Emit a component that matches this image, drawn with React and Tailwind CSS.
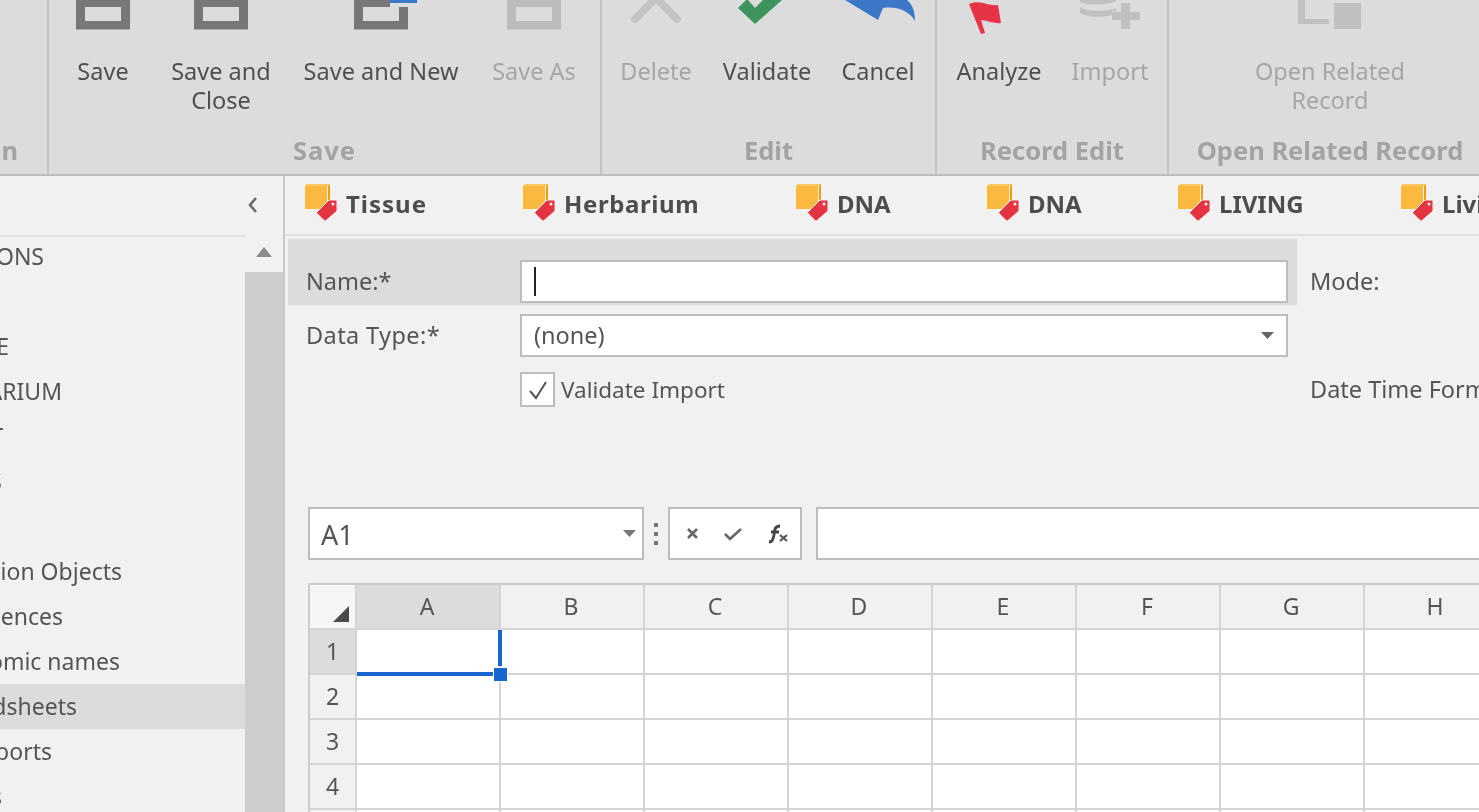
import React from "react";

function RibbonButton({ w, label, disabled, children, line2 }) {
  return (
    <div className={`flex flex-col items-center shrink-0 ${w}`}>
      <div className="h-[57px] w-full flex justify-center items-start">{children}</div>
      <div className={`text-[23.5px] leading-[29px] text-center whitespace-nowrap ${disabled ? "text-[#a6a6a6]" : "text-[#505050]"}`}>
        <div>{label}</div>
        {line2 && <div>{line2}</div>}
      </div>
    </div>
  );
}

function Group({ w, title, children, last, track }) {
  return (
    <div className={`relative shrink-0 h-full flex flex-col ${w} ${last ? "" : "border-r-2 border-[#c2c2c2]"}`}>
      <div className="flex h-[135px]">{children}</div>
      <div className={`text-[25.5px] leading-[30px] font-bold text-[#a3a3a3] text-center whitespace-nowrap ${track || ""}`}>{title}</div>
    </div>
  );
}

const SaveIcon = ({ c = "#777777" }) => (
  <svg width="54" height="30" viewBox="0 0 54 30">
    <path d="M0 0H54V29.5H0Z M9 7V21H45V7Z" fillRule="evenodd" fill={c} />
  </svg>
);

const SaveNewIcon = () => (
  <svg width="64" height="30" viewBox="0 0 64 30" className="ml-[10px]">
    <path d="M0 0H36V7H9V21H36V7H54V29.5H0Z" fill="#777777" fillRule="evenodd" />
    <path d="M36 7H45V21H36Z" fill="#dcdcdc" />
    <path d="M36 3H45V7H36Z" fill="#dcdcdc" />
    <rect x="36" y="0" width="27" height="3" fill="#3b78c9" />
  </svg>
);

const DeleteIcon = () => (
  <svg width="50" height="24" viewBox="0 0 50 24">
    <path d="M4 19L25 -2L46 19" fill="none" stroke="#c4c4c4" strokeWidth="8" strokeLinecap="round" />
  </svg>
);

const CheckIcon = () => (
  <svg width="44" height="24" viewBox="0 0 44 24" className="mr-[14px]">
    <path d="M0 8L8 0H10L17 8L25 0H44L17 24Z" fill="#3f935c" />
  </svg>
);

const CancelIcon = () => (
  <svg width="70" height="22" viewBox="0 0 70 22" className="ml-[4px]">
    <path d="M0 0L33 20L38 8C50 6 64 10 70 21C70 12 68 5 62 0Z" fill="#3d78c8" />
  </svg>
);

const FlagIcon = () => (
  <svg width="33" height="33" viewBox="0 0 33 33" className="mt-[2px] mr-[28px]">
    <path d="M0 2C5 0 9 0 14 1C19 2 24 4 29 3L32 21C26 22 20 19 12 18L16 31L12 32Z" fill="#e63446" />
  </svg>
);

const ImportIcon = () => (
  <svg width="60" height="30" viewBox="0 0 60 30">
    <path d="M0 0H36V1C30 5 8 6 0 2ZM0 7C8 12 28 12 36 8V11H32V15C22 18 6 17 0 13Z" fill="#c0c0c0" />
    <path d="M32 12H41V3H50V12H60V20H50V29H41V20H32Z" fill="#c0c0c0" />
  </svg>
);

const RelatedIcon = () => (
  <svg width="64" height="30" viewBox="0 0 64 30">
    <path d="M0 0H7V19H31V24H0Z" fill="#c0c0c0" />
    <rect x="36" y="3" width="27" height="26" fill="#c0c0c0" />
  </svg>
);

const TagBox = () => (
  <svg width="32" height="37" viewBox="0 0 32 37" className="shrink-0 -mt-[6px]">
    <path d="M0 2H22V25H0Z" fill="#fbb93f" />
    <path d="M2 0H25L22 2H0Z" fill="#fcc660" />
    <path d="M23 2L25 0V20L23 22Z" fill="#f59d00" />
    <path d="M24 16H31C31.6 16 32 16.4 32 17V27L21 36.5C20.4 37 19.6 37 19 36.4L12 29.5C11.5 29 11.5 28.4 12 28Z" fill="#e43341" stroke="#f1f1f1" strokeWidth="1" />
    <circle cx="28" cy="20" r="1.5" fill="#f2f2f2" />
  </svg>
);

function Tab({ w, label, track }) {
  return (
    <div className={`flex items-center shrink-0 gap-[9px] ${w}`}>
      <TagBox />
      <span className={`text-[24px] font-bold text-[#4d4d4d] whitespace-nowrap -mt-[2px] ${track || ""}`}>{label}</span>
    </div>
  );
}

function SideRow({ end, text, selected }) {
  return (
    <div className={`h-[45px] flex items-center ${selected ? "bg-[#dcdcdc]" : ""}`}>
      {text && (
        <div className={`overflow-hidden flex justify-end whitespace-nowrap text-[23px] text-[#555555] ${end}`}>
          <span className="shrink-0">{text}</span>
        </div>
      )}
    </div>
  );
}

const cols = ["A", "B", "C", "D", "E", "F", "G", "H"];
const rows = ["1", "2", "3", "4", "5"];

function Sheet() {
  return (
    <div className="mt-[23px] ml-[23px] border-l-2 border-t-2 border-[#cccccc] grid grid-cols-[47px_repeat(8,144px)] grid-rows-[45px_repeat(5,45px)] w-[1200px] text-[23px] text-[#555555]">
      <div className="border-r-2 border-b-2 border-[#d4d4d4] bg-[#f5f5f5] flex items-end justify-end pr-[6px] pb-[6px]">
        <svg width="16" height="16" viewBox="0 0 16 16"><path d="M16 0V16H0Z" fill="#4a4a4a" /></svg>
      </div>
      {cols.map((c) => (
        <div key={c} className={`border-r-2 border-b-2 border-[#d4d4d4] flex items-center justify-center pr-[2px] ${c === "A" ? "bg-[#dcdcdc]" : "bg-[#f1f1f1]"}`}>{c}</div>
      ))}
      {rows.map((r) => (
        <React.Fragment key={r}>
          <div className={`border-r-2 border-b-2 border-[#d4d4d4] flex items-center justify-center ${r === "1" ? "bg-[#dcdcdc]" : "bg-[#f1f1f1]"}`}>{r}</div>
          {cols.map((c) => (
            <div key={c} className="relative border-r-2 border-b-2 border-[#d4d4d4] bg-white">
              {r === "1" && c === "A" && (
                <>
                  <div className="absolute left-0 bottom-[-3px] w-[136px] h-[4px] bg-[#1a66d0] z-10" />
                  <div className="absolute right-[-3px] top-0 h-[36px] w-[4px] bg-[#1a66d0] z-10" />
                  <div className="absolute right-[-9px] bottom-[-9px] w-[15px] h-[15px] bg-[#1a66d0] z-20 border border-white" />
                </>
              )}
            </div>
          ))}
        </React.Fragment>
      ))}
    </div>
  );
}

export default function App() {
  return (
    <div className="h-[812px] w-[1479px] overflow-hidden bg-[#f1f1f1] blur-[0.7px] font-['Noto_Sans','Open_Sans',sans-serif]">
      <div className="h-[176px] bg-[#dcdcdc] border-b-2 border-[#bdbdbd] flex overflow-hidden">
        <div className="w-[49px] shrink-0 h-full border-r-2 border-[#c2c2c2] flex flex-col">
          <div className="h-[135px]" />
          <div className="w-[18px] overflow-hidden flex justify-end text-[25.5px] leading-[30px] font-bold text-[#a3a3a3] whitespace-nowrap">
            <span className="shrink-0">on</span>
          </div>
        </div>
        <Group w="w-[553px]" title="Save" track="tracking-[1px]">
          <RibbonButton w="w-[108px]" label="Save"><SaveIcon /></RibbonButton>
          <RibbonButton w="w-[128px]" label="Save and" line2="Close"><SaveIcon /></RibbonButton>
          <RibbonButton w="w-[192px]" label="Save and New"><SaveNewIcon /></RibbonButton>
          <RibbonButton w="w-[114px]" label="Save As" disabled><SaveIcon c="#bcbcbc" /></RibbonButton>
        </Group>
        <Group w="w-[335px]" title="Edit">
          <RibbonButton w="w-[108px]" label="Delete" disabled><DeleteIcon /></RibbonButton>
          <RibbonButton w="w-[114px]" label="Validate"><CheckIcon /></RibbonButton>
          <RibbonButton w="w-[108px]" label="Cancel"><CancelIcon /></RibbonButton>
        </Group>
        <Group w="w-[232px]" title="Record Edit">
          <RibbonButton w="w-[124px]" label="Analyze"><FlagIcon /></RibbonButton>
          <RibbonButton w="w-[98px]" label="Import" disabled><ImportIcon /></RibbonButton>
        </Group>
        <Group w="w-[322px]" title="Open Related Record" last>
          <RibbonButton w="w-[322px]" label="Open Related" line2="Record" disabled><RelatedIcon /></RibbonButton>
        </Group>
      </div>

      <div className="flex h-[636px]">
        <div className="w-[285px] shrink-0 border-r-2 border-[#c8c8c8] flex flex-col">
          <div className="h-[60px] shrink-0 flex items-center justify-end pr-[24px]">
            <svg width="12" height="16" viewBox="0 0 12 16" className="-mt-[2px]"><path d="M9 1L3 8L9 15" fill="none" stroke="#6a6a6a" strokeWidth="2.6" /></svg>
          </div>
          <div className="flex flex-1 min-h-0">
            <div className="w-[245px] shrink-0 flex flex-col">
              <div className="-mt-[1px] h-[2px] bg-[#e2e2e2] shrink-0" />
              <div className="-mt-[3px]">
                <SideRow end="w-[44px]" text="ONS" />
                <SideRow />
                <SideRow end="w-[9px]" text="E" />
                <SideRow end="w-[62px]" text="ARIUM" />
                <SideRow end="w-[3px]" text="T" />
                <SideRow end="w-[2px]" text="S" />
                <SideRow />
                <SideRow end="w-[122px]" text="ion Objects" />
                <SideRow end="w-[63px]" text="ences" />
                <SideRow end="w-[120px]" text="omic names" />
                <SideRow end="w-[77px]" text="dsheets" selected />
                <SideRow end="w-[52px]" text="ports" />
                <SideRow end="w-[2px]" text="s" />
              </div>
            </div>
            <div className="flex-1 flex flex-col">
              <div className="h-[36px] shrink-0 flex justify-center pt-[10px]">
                <svg width="18" height="12" viewBox="0 0 18 12"><path d="M9 1L17 11H1Z" fill="#8a8a8a" /></svg>
              </div>
              <div className="flex-1 bg-[#cdcdcd]" />
            </div>
          </div>
        </div>

        <div className="flex-1 min-w-0 overflow-hidden">
          <div className="h-[60px] border-b-2 border-[#dfdfdf] flex items-center pl-[20px]">
            <Tab w="w-[218px]" label="Tissue" track="tracking-[1px]" />
            <Tab w="w-[273px]" label="Herbarium" track="tracking-[0.6px]" />
            <Tab w="w-[191px]" label="DNA" />
            <Tab w="w-[191px]" label="DNA" />
            <Tab w="w-[223px]" label="LIVING" />
            <Tab w="w-[223px]" label="Living" />
          </div>

          <div className="text-[23.5px] text-[#555555]">
            <div className="flex items-start mt-[3px] ml-[3px]">
              <div className="w-[1009px] h-[66px] bg-[#dcdcdc] flex items-end shrink-0 pb-[2px] pl-[18px]">
                <div className="w-[214px] h-[43px] flex items-center">Name:*</div>
                <div className="w-[768px] h-[43px] bg-white border-2 border-[#bdbdbd] flex items-center pl-[12px]">
                  <div className="w-[2px] h-[29px] bg-[#222222]" />
                </div>
              </div>
              <div className="ml-[13px] mt-[21px] h-[43px] flex items-center whitespace-nowrap">Mode:</div>
            </div>
            <div className="flex items-center mt-[9px] ml-[21px]">
              <div className="w-[214px] tracking-[0.4px]">Data Type:*</div>
              <div className="w-[768px] h-[43px] bg-white border-2 border-[#bdbdbd] flex items-center justify-between pl-[12px] pr-[12px]">
                <span>(none)</span>
                <svg width="13" height="7" viewBox="0 0 13 7"><path d="M0 0H13L6.5 7Z" fill="#666666" /></svg>
              </div>
            </div>
            <div className="flex items-center mt-[15px] ml-[235px] h-[35px] whitespace-nowrap w-[1300px]">
              <div className="w-[35px] h-[35px] shrink-0 bg-white border-2 border-[#bdbdbd] flex items-center justify-center">
                <svg width="22" height="22" viewBox="0 0 22 22"><path d="M3 12L9 19L19 3" fill="none" stroke="#555555" strokeWidth="2" /></svg>
              </div>
              <span className="ml-[6px] w-[749px] shrink-0 text-[22.5px]">Validate Import</span>
              <span className="shrink-0">Date Time Format:</span>
            </div>
            <div className="flex items-center mt-[100px] ml-[23px] h-[53px] w-[1300px]">
              <div className="w-[336px] shrink-0 h-full bg-white border-2 border-[#bdbdbd] flex items-center justify-between pl-[11px] pr-[6px] text-[27px]">
                <span className="pt-[3px]">A1</span>
                <svg width="13" height="7" viewBox="0 0 13 7"><path d="M0 0H13L6.5 7Z" fill="#777777" /></svg>
              </div>
              <div className="w-[24px] shrink-0 flex flex-col items-center gap-[5px]">
                <div className="w-[4px] h-[4px] bg-[#777777]" />
                <div className="w-[4px] h-[4px] bg-[#777777]" />
                <div className="w-[4px] h-[4px] bg-[#777777]" />
              </div>
              <div className="w-[134px] shrink-0 h-full bg-white border-2 border-[#bdbdbd] flex items-center justify-between pl-[16px] pr-[11px]">
                <svg width="13" height="13" viewBox="0 0 13 13"><path d="M2 2L11 11M11 2L2 11" stroke="#666666" strokeWidth="2.6" /></svg>
                <svg width="18" height="14" viewBox="0 0 18 14"><path d="M1 7L6 12L17 2" fill="none" stroke="#666666" strokeWidth="2.6" /></svg>
                <svg width="22" height="20" viewBox="0 0 22 20"><path d="M2 18C5 18 6 16 7 11L8 5C9 3 10 2 13 2M4 8H12" fill="none" stroke="#444444" strokeWidth="2.8" /><path d="M13 11L20 17M20 11L13 17" stroke="#555555" strokeWidth="2.2" /></svg>
              </div>
              <div className="ml-[14px] flex-1 h-full bg-white border-2 border-[#bdbdbd]" />
            </div>
            <Sheet />
          </div>
        </div>
      </div>
    </div>
  );
}
